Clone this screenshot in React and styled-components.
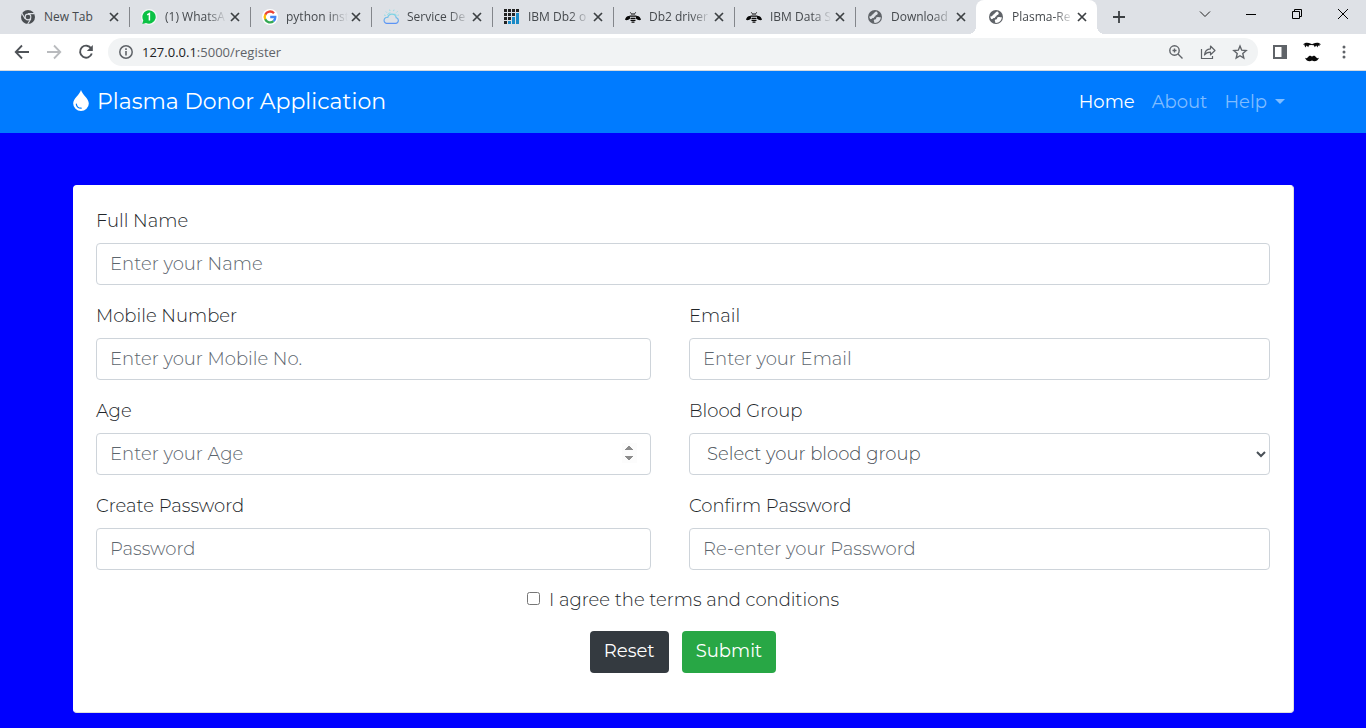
import React from "react";
import styled, { createGlobalStyle, css } from "styled-components";

const GlobalStyle = createGlobalStyle`
  *, *::before, *::after { box-sizing: border-box; }
  html, body { margin: 0; background: #0000ff; }
  button, input, select { font: inherit; margin: 0; }
`;

const pageFont = '"Montserrat", "Inter", "Liberation Sans", sans-serif';
const chromeFont = '"Segoe UI", "Open Sans", "Noto Sans", sans-serif';

/* ---------- browser frame ---------- */

const TabStrip = styled.div`
  display: flex;
  align-items: center;
  height: 34px;
  padding-left: 8px;
  background: #dee1e6;
  color: #45494d;
  font: 12px/16px ${chromeFont};
`;

const Tab = styled.div`
  position: relative;
  display: flex;
  align-items: center;
  gap: 8px;
  flex: 0 1 121px;
  min-width: 0;
  height: 34px;
  padding: 0 7px 0 12px;
  ${({ $divided }) =>
    $divided &&
    css`
      &::after {
        content: "";
        position: absolute;
        right: -1px;
        top: 7px;
        width: 1px;
        height: 20px;
        background: #83868b;
      }
    `}
  ${({ $active }) =>
    $active &&
    css`
      background: #fff;
      border-radius: 8px 8px 0 0;
      &::before,
      &::after {
        content: "";
        position: absolute;
        bottom: 0;
        width: 8px;
        height: 8px;
      }
      &::before {
        left: -8px;
        background: radial-gradient(circle at 0 0, transparent 8px, #fff 8px);
      }
      &::after {
        right: -8px;
        background: radial-gradient(circle at 100% 0, transparent 8px, #fff 8px);
      }
    `}
`;

const TabTitle = styled.span`
  flex: 1;
  min-width: 0;
  white-space: nowrap;
  ${({ $fade }) =>
    $fade && "mask-image: linear-gradient(90deg, #000 calc(100% - 20px), transparent);"}
`;

const IconButton = styled.button`
  display: flex;
  align-items: center;
  justify-content: center;
  flex: none;
  width: ${({ $w }) => $w || 16}px;
  height: ${({ $h }) => $h || 16}px;
  padding: 0;
  border: 0;
  background: none;
  color: ${({ $color }) => $color || "#5f6368"};
`;

const TabClose = styled(IconButton)`
  margin-left: -8px;
  color: #3c4043;
`;

const WindowControls = styled.div`
  display: flex;
  align-self: flex-start;
  margin-left: auto;
`;

const NewTab = styled(IconButton)`
  margin-left: 8px;
`;

const Toolbar = styled.div`
  display: flex;
  align-items: center;
  height: 37px;
  padding: 0 6px;
  background: #fff;
  border-bottom: 1px solid #d5d9de;
`;

const Omnibox = styled.div`
  display: flex;
  align-items: center;
  flex: 1;
  gap: 8px;
  height: 28px;
  margin: 0 6px;
  padding: 0 6px 0 10px;
  border-radius: 14px;
  background: #f1f3f4;
`;

const Address = styled.div`
  flex: 1;
  color: #5f6368;
  font: 13px/20px ${chromeFont};
  b { color: #202124; font-weight: 400; }
`;

/* ---------- page ---------- */

const Page = styled.div`
  color: #212529;
  font: 18px/26px ${pageFont};
`;

const Navbar = styled.nav`
  display: flex;
  align-items: center;
  justify-content: space-between;
  height: 62px;
  padding: 0 81px 0 73px;
  background: #007bff;
`;

const Brand = styled.a`
  display: flex;
  align-items: center;
  gap: 8px;
  color: #fff;
  font-size: 22px;
  text-decoration: none;
`;

const NavLinks = styled.div`
  display: flex;
  gap: 17px;
`;

const NavLink = styled.a`
  display: flex;
  align-items: center;
  gap: 8px;
  color: ${({ $active }) => ($active ? "#fff" : "#80bdff")};
  text-decoration: none;
`;

const Caret = styled.span`
  border: 5px solid transparent;
  border-top-color: currentColor;
  border-bottom: 0;
  margin-bottom: 2px;
`;

const Main = styled.main`
  padding: 52px 72px 15px 73px;
`;

const Card = styled.form`
  padding: 22px 23px 39px 22px;
  border: 1px solid #dfdfdf;
  border-color: #fff #dfdfdf #dfdfdf #fff;
  border-radius: 4px;
  background: #fff;
  font-weight: 300;
`;

const Fields = styled.div`
  display: grid;
  grid-template-columns: 555fr 581fr;
  gap: 18px 38px;
`;

const Field = styled.div`
  display: flex;
  flex-direction: column;
  gap: 9px;
  min-width: 0;
  ${({ $wide }) => $wide && "grid-column: 1 / -1;"}
`;

const controlStyle = css`
  width: 100%;
  height: 42px;
  padding: 0 13px;
  border: 1px solid #ced4da;
  border-radius: 4px;
  outline: 0;
  background: #fff;
  color: #495057;
`;

const TextInput = styled.input`
  ${controlStyle}
  &::placeholder { color: #5c656d; opacity: 1; }
  &::-webkit-inner-spin-button { opacity: 1; height: 20px; }
`;

const Select = styled.select`
  ${controlStyle}
`;

const Agreement = styled.div`
  display: flex;
  align-items: center;
  justify-content: center;
  gap: 9px;
  margin: 17px 0 18px;
`;

const Checkbox = styled.input`
  width: 13px;
  height: 13px;
  margin-bottom: 3px;
`;

const Actions = styled.div`
  display: flex;
  justify-content: center;
  gap: 13px;
`;

const ActionButton = styled.button`
  height: 42px;
  padding: 0 14px 2px;
  border: 0;
  border-radius: 4px;
  background: ${({ $tone }) => $tone};
  color: #fff;
  font-weight: 400;
`;

/* ---------- icons ---------- */

const Svg = ({ size = 16, w, h, box = "0 0 16 16", children, ...rest }) => (
  <svg width={w || size} height={h || size} viewBox={box} fill="none" aria-hidden="true" {...rest}>
    {children}
  </svg>
);

const ChromeIcon = () => (
  <Svg>
    <circle cx="8" cy="8" r="7" fill="#4a4e52" />
    <circle cx="8" cy="8" r="3.4" fill="#dee1e6" />
    <circle cx="8" cy="8" r="2.3" fill="#4a4e52" />
    <path d="M8 4.6h6.4M5.1 9.7L1.9 4.2M10.9 9.7L7.7 15" stroke="#dee1e6" strokeWidth="1.1" />
  </Svg>
);

const WhatsAppIcon = () => (
  <Svg>
    <rect width="16" height="16" rx="8" fill="#f4f6f6" />
    <path d="M8 1.3a6.7 6.7 0 1 1-3 12.7L1.3 15l1-3.6A6.7 6.7 0 0 1 8 1.3z" fill="#0bc144" />
    <path d="M6.2 5.8L8.4 4.6v7" stroke="#fff" strokeWidth="1.5" />
  </Svg>
);

const GoogleIcon = () => (
  <Svg>
    <circle cx="8" cy="8" r="8" fill="#fff" />
    <g strokeWidth="2.3">
      <path d="M12 4.2A5.3 5.3 0 0 0 3.2 5.8" stroke="#ea4335" />
      <path d="M3.3 5.6a5.3 5.3 0 0 0 0 4.8" stroke="#fbbc05" />
      <path d="M3.2 10.2a5.3 5.3 0 0 0 8.3 2" stroke="#34a853" />
      <path d="M8.2 8h5.1a5 5 0 0 1-1.8 4.2" stroke="#4285f4" />
    </g>
  </Svg>
);

const CloudIcon = () => (
  <Svg>
    <defs>
      <linearGradient id="cloud" x1="0" y1="0" x2="0" y2="1">
        <stop offset="0" stopColor="#7ed5e3" />
        <stop offset="1" stopColor="#5b93f5" />
      </linearGradient>
    </defs>
    <path d="M3.6 14.4h9a2.9 2.9 0 0 0 .6-5.7 4.3 4.3 0 0 0-8.4-.4 3.1 3.1 0 0 0-1.2 6.1z" stroke="url(#cloud)" strokeWidth="1.2" />
    <path d="M4.4 6a3.5 3.5 0 0 1 3-2.2M13 7a3 3 0 0 0-1-2.4M7 2l-.4-1.4M3.9 3.6l-1-1M2.6 6.4L1 6M10.5 2.2l.5-1.500M13.500 3.400l1-1M14.500 6.300l1.400-.3" stroke="#8fdce6" strokeWidth="1" />
  </Svg>
);

const Db2Icon = () => (
  <Svg>
    {[0, 1, 2, 3].flatMap((c) =>
      [0, 1, 2, 3].map((r) => {
        const blue = r > 3 - c && c > 0;
        return (
          <rect key={`${c}${r}`} x={c * 4} y={r * 4} width="3" height={blue && r < 3 ? 4 : 3} fill={blue ? "#1a8ac6" : "#222"} />
        );
      })
    )}
  </Svg>
);

const BeeIcon = () => (
  <Svg>
    <path d="M5 7.300C3 6.300.6 7.600 0 10.800c1.600.8 3.600.2 5-1.300zM11 7.300c2-1 4.400.3 5 3.500-1.600.8-3.600.2-5-1.300z" fill="#080808" />
    <path d="M6 4.500L5.400 3.400M10 4.500l.6-1.100" stroke="#080808" strokeWidth="1" />
    <path d="M6 5h4M4.500 7.200h7M5.500 9.300h5M5.500 11.300h5M6.500 13.200h3" stroke="#080808" strokeWidth="1.200" />
  </Svg>
);

const GlobeIcon = ({ bg = "#dee1e6" }) => (
  <Svg>
    <circle cx="8" cy="8" r="7" fill="#5f6368" />
    <path d="M9.300 2.400c-1.600.1-1.200 1.100-2 1.400-1 .3-.7 1.600-1.700 1.800-1.200.2-.6 1.400-1.700 1.600l-1.700.4c.2 1 .5 1.800 1 2.500.8.3 1.900-.1 2.200-1 1.300.2 2-.2 1.800-1.300 1-.1 1.600-.7 1.500-1.600 1.300-.1 2.200-.9 2-2 0-.8-.5-1.500-1.400-1.800z" fill={bg} />
    <path d="M13.800 8.200c-1.100.5-1.700-.5-3-.2-1.500.3-2.300 1.200-1.500 2.100-.9.300-2.400.4-2.500 1.500-.1.900.7 1.300.6 2.300 3.500.3 6.300-2.200 6.400-5.700z" fill={bg} />
  </Svg>
);

const CloseIcon = () => (
  <Svg stroke="currentColor"><path d="M4 4l8 8M12 4l-8 8" strokeWidth="1.7" /></Svg>
);

const DropIcon = () => (
  <Svg w={16} h={24} box="0 0 16 24">
    <path d="M8 0C6.500 5 .2 8.500.2 13.500A7.800 7.600 0 0 0 15.800 13.500C15.800 8.500 9.500 5 8 0z" fill="#fff" />
    <path d="M3.300 14a4.800 4.800 0 0 0 4.900 4.200" stroke="#007bff" strokeWidth="1.200" strokeLinecap="round" />
  </Svg>
);

const TABS = [
  ["New Tab", ChromeIcon],
  ["(1) WhatsA", WhatsAppIcon],
  ["python inst", GoogleIcon],
  ["Service De", CloudIcon],
  ["IBM Db2 o", Db2Icon],
  ["Db2 driver", BeeIcon],
  ["IBM Data S", BeeIcon],
  ["Download", GlobeIcon],
  ["Plasma-Re", GlobeIcon],
];

function BrowserFrame() {
  return (
    <header>
      <TabStrip>
        {TABS.map(([title, Icon], i) => {
          const active = i === TABS.length - 1;
          return (
            <Tab key={title} $active={active} $divided={i < TABS.length - 2}>
              <Icon {...(active ? { bg: "#fff" } : {})} />
              <TabTitle $fade={i > 0}>{title}</TabTitle>
              <TabClose type="button" aria-label={`Close ${title}`}><CloseIcon /></TabClose>
            </Tab>
          );
        })}
        <NewTab type="button" aria-label="Open tab" $w={28} $h={28} $color="#3c4043">
          <Svg><path d="M8 2v12M2 8h12" stroke="currentColor" strokeWidth="1.8" /></Svg>
        </NewTab>
        <WindowControls>
          <IconButton type="button" aria-label="Search tabs" $w={46} $h={28} $color="#222">
            <Svg><path d="M3 5.500l5 5 5-5" stroke="currentColor" /></Svg>
          </IconButton>
          <IconButton type="button" aria-label="Minimize" $w={46} $h={28} $color="#000">
            <Svg><path d="M3 8.500h10" stroke="currentColor" /></Svg>
          </IconButton>
          <IconButton type="button" aria-label="Restore" $w={46} $h={28} $color="#000">
            <Svg><path d="M3.500 5.500h7v7h-7zM5.500 5.500v-2h7v7h-2" stroke="currentColor" /></Svg>
          </IconButton>
          <IconButton type="button" aria-label="Close window" $w={46} $h={28} $color="#000">
            <Svg><path d="M3 3l10 10M13 3L3 13" stroke="currentColor" /></Svg>
          </IconButton>
        </WindowControls>
      </TabStrip>
      <Toolbar>
        <IconButton type="button" aria-label="Back" $w={32} $h={28}>
          <Svg><path d="M15 8H2M8 1.500L1.700 8 8 14.500" stroke="#4f5358" strokeWidth="1.800" /></Svg>
        </IconButton>
        <IconButton type="button" aria-label="Forward" $w={32} $h={28}>
          <Svg><path d="M1 8h13M8 1.500L14.300 8 8 14.500" stroke="#b9bbbe" strokeWidth="1.800" /></Svg>
        </IconButton>
        <IconButton type="button" aria-label="Reload" $w={32} $h={28}>
          <Svg>
            <path d="M13.200 4.500a6 6 0 1 0 .6 5" stroke="#4f5358" strokeWidth="1.900" />
            <path d="M14.800 1v6H8.800z" fill="#4f5358" />
          </Svg>
        </IconButton>
        <Omnibox>
          <Svg>
            <circle cx="8" cy="8" r="6.200" stroke="#5f6368" strokeWidth="1.500" />
            <path d="M8 7v4.500M8 4.300v1.600" stroke="#5f6368" strokeWidth="1.600" />
          </Svg>
          <Address><b>127.0.0.1</b>:5000/register</Address>
          <IconButton type="button" aria-label="Zoom" $w={24} $h={28}>
            <Svg>
              <circle cx="6.500" cy="6.500" r="4.700" stroke="currentColor" strokeWidth="1.400" />
              <path d="M10 10l4.500 4.500M6.500 4.500v4M4.500 6.500h4" stroke="currentColor" strokeWidth="1.400" />
            </Svg>
          </IconButton>
          <IconButton type="button" aria-label="Share" $w={24} $h={28}>
            <Svg stroke="currentColor" strokeWidth="1.200">
              <path d="M1.500 5v9.500h11V12" />
              <path d="M4.500 11c.4-4 2.600-6 6-6.200V2l4.500 4.500-4.500 4.300V8.200c-2.800 0-4.700.8-6 2.800z" strokeLinejoin="round" />
            </Svg>
          </IconButton>
          <IconButton type="button" aria-label="Bookmark" $w={24} $h={28}>
            <Svg><path d="M8 2l1.700 4.200 4.500.4-3.400 3 1 4.400L8 11.700 4.200 14l1-4.400-3.400-3 4.500-.4z" stroke="currentColor" strokeWidth="1.400" /></Svg>
          </IconButton>
        </Omnibox>
        <IconButton type="button" aria-label="Side panel" $w={32} $h={28}>
          <Svg>
            <path d="M1 1h14v14H1zM3 3v10h6.500V3z" fill="#5f6368" fillRule="evenodd" />
          </Svg>
        </IconButton>
        <IconButton type="button" aria-label="Profile" $w={32} $h={28}>
          <Svg size={20} box="0 0 20 20">
            <path d="M1 2.500C3 .3 6 .4 9 1.800l1 .5 1-.5c3-1.400 6-1.500 8 .7l-2 .2 1 1.600-2-.8-.3 2-1.500-2-1.400 1.700-1-2-2.800-.2-2 .2-.8 2-1.500-1.700-1.400 2-.7-2L2 4.300l.8-1.500z" fill="#090909" />
            <path d="M10 14.700c1.300-1.700 3.200-1 4.200.6.6 1 1.700 1 2.800.5-1.300 3.500-4.800 4.300-7 2.700-2.200 1.600-5.700.8-7-2.700 1.100.5 2.200.5 2.800-.5 1-1.600 2.900-2.300 4.200-.6z" fill="#090909" />
          </Svg>
        </IconButton>
        <IconButton type="button" aria-label="Menu" $w={32} $h={28}>
          <Svg>
            <g fill="#5f6368"><circle cx="8" cy="3" r="1.500" /><circle cx="8" cy="8" r="1.500" /><circle cx="8" cy="13" r="1.500" /></g>
          </Svg>
        </IconButton>
      </Toolbar>
    </header>
  );
}

function LabeledInput({ id, label, wide, ...props }) {
  return (
    <Field $wide={wide}>
      <label htmlFor={id}>{label}</label>
      <TextInput id={id} {...props} />
    </Field>
  );
}

export default function App() {
  return (
    <>
      <GlobalStyle />
      <BrowserFrame />
      <Page>
        <Navbar>
          <Brand href="#"><DropIcon />Plasma Donor Application</Brand>
          <NavLinks>
            <NavLink href="#" $active>Home</NavLink>
            <NavLink href="#">About</NavLink>
            <NavLink href="#">Help<Caret /></NavLink>
          </NavLinks>
        </Navbar>
        <Main>
          <Card onSubmit={(e) => e.preventDefault()}>
            <Fields>
              <LabeledInput wide id="name" label="Full Name" placeholder="Enter your Name" />
              <LabeledInput id="mobile" label="Mobile Number" type="tel" placeholder="Enter your Mobile No." />
              <LabeledInput id="email" label="Email" type="email" placeholder="Enter your Email" />
              <LabeledInput id="age" label="Age" type="number" placeholder="Enter your Age" />
              <Field>
                <label htmlFor="blood">Blood Group</label>
                <Select id="blood" defaultValue="">
                  <option value="">Select your blood group</option>
                </Select>
              </Field>
              <LabeledInput id="password" label="Create Password" type="password" placeholder="Password" />
              <LabeledInput id="confirm" label="Confirm Password" type="password" placeholder="Re-enter your Password" />
            </Fields>
            <Agreement>
              <Checkbox id="agree" type="checkbox" />
              <label htmlFor="agree">I agree the terms and conditions</label>
            </Agreement>
            <Actions>
              <ActionButton type="reset" $tone="#343a40">Reset</ActionButton>
              <ActionButton type="submit" $tone="#28a745">Submit</ActionButton>
            </Actions>
          </Card>
        </Main>
      </Page>
    </>
  );
}
